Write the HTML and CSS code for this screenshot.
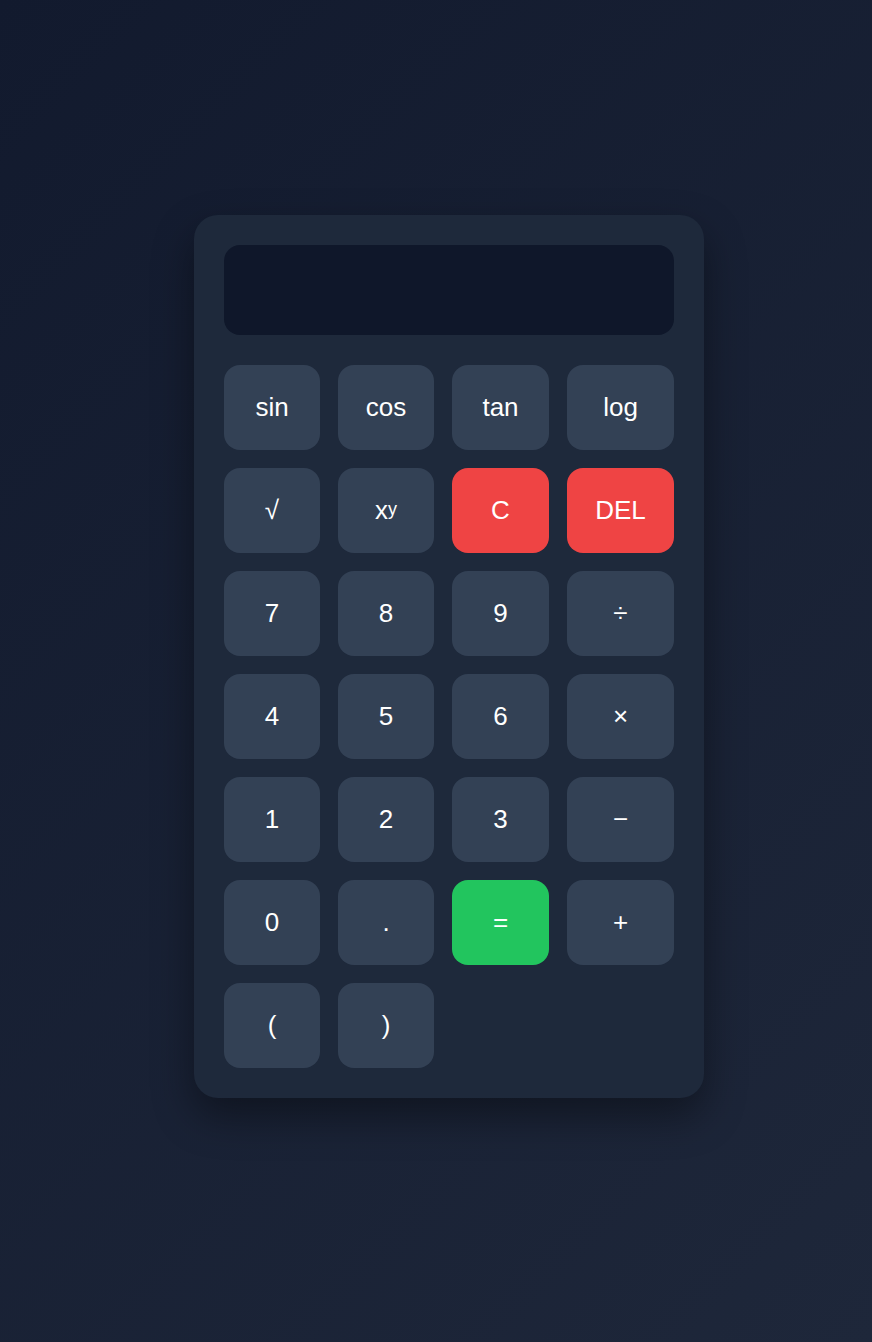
FILE: index.html
```html
<!DOCTYPE html>
<html lang="en">
<head>
<meta charset="utf-8">
<title>Calculator</title>
<link rel="stylesheet" href="styles.css">
</head>
<body>
<div class="calculator">
  <div class="display"></div>
  <div class="keys">
    <button class="key">sin</button>
    <button class="key">cos</button>
    <button class="key">tan</button>
    <button class="key">log</button>
    <button class="key">√</button>
    <button class="key">x<sup>y</sup></button>
    <button class="key danger">C</button>
    <button class="key danger">DEL</button>
    <button class="key">7</button>
    <button class="key">8</button>
    <button class="key">9</button>
    <button class="key">÷</button>
    <button class="key">4</button>
    <button class="key">5</button>
    <button class="key">6</button>
    <button class="key">×</button>
    <button class="key">1</button>
    <button class="key">2</button>
    <button class="key">3</button>
    <button class="key">−</button>
    <button class="key">0</button>
    <button class="key">.</button>
    <button class="key equals">=</button>
    <button class="key">+</button>
    <button class="key">(</button>
    <button class="key">)</button>
  </div>
</div>
</body>
</html>
```
FILE: styles.css
```css
html, body {
  margin: 0;
  padding: 0;
}
body {
  min-height: 1342px;
  box-sizing: border-box;
  background: linear-gradient(135deg, #121a2e 0%, #1e273a 100%);
  display: flex;
  justify-content: flex-start;
  align-items: flex-start;
  padding-top: 215px;
  padding-left: 194px;
  font-family: "Liberation Sans", Arial, sans-serif;
}
.calculator {
  width: 510px;
  box-sizing: border-box;
  padding: 30px;
  background: #1e293b;
  border-radius: 24px;
  box-shadow: 0 18px 40px rgba(0, 0, 0, 0.4);
}
.display {
  height: 90px;
  background: #0f172a;
  border-radius: 16px;
  margin-bottom: 30px;
}
.keys {
  display: grid;
  grid-template-columns: 96px 96px 97px 107px;
  grid-auto-rows: 85px;
  gap: 18px;
}
.key {
  border: none;
  margin: 0;
  padding: 0;
  background: #334155;
  color: #ffffff;
  border-radius: 16px;
  font-family: "Liberation Sans", Arial, sans-serif;
  font-size: 26px;
  display: flex;
  align-items: center;
  justify-content: center;
}
.key sup {
  font-size: 18px;
  line-height: 0;
  position: relative;
  top: -2px;
}
.danger {
  background: #ef4444;
}
.equals {
  background: #22c55e;
}
```
